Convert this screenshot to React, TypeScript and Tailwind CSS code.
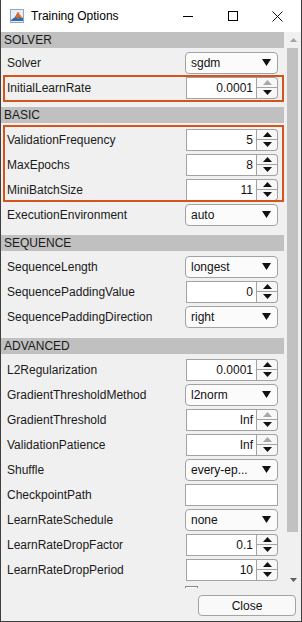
import React from 'react';

type Ctl =
	| { kind: 'drop'; value: string }
	| { kind: 'spin'; value: string; upOff?: boolean }
	| { kind: 'text' }
	| { kind: 'check' };

type Row = { label: string; ctl: Ctl };

function Up({ off }: { off?: boolean }) {
	return (
		<svg width="9" height="5" viewBox="0 0 9 5">
			<polygon points="4.5,0 9,5 0,5" fill={off ? '#a8a8a8' : '#111'} />
		</svg>
	);
}

function Down({ color = '#111' }: { color?: string }) {
	return (
		<svg width="9" height="5" viewBox="0 0 9 5">
			<polygon points="0,0 9,0 4.5,5" fill={color} />
		</svg>
	);
}

function Control({ ctl }: { ctl: Ctl }) {
	if (ctl.kind === 'drop') {
		return (
			<div className="flex h-[22px] w-[93px] items-center justify-between rounded-[4px] border border-[#a3a3a3] bg-[#fbfbfb] pl-[5px] pr-[6px] text-[12px] text-[#111]">
				<span>{ctl.value}</span>
				<svg width="9" height="7" viewBox="0 0 9 7">
					<polygon points="0,0 9,0 4.5,7" fill="#111" />
				</svg>
			</div>
		);
	}
	if (ctl.kind === 'spin') {
		return (
			<div className="flex h-[22px] w-[92px]">
				<div className="flex flex-1 items-center justify-end border border-[#a3a3a3] bg-white pr-[3px] text-[12px] text-[#111]">
					{ctl.value}
				</div>
				<div className="flex w-[21px] flex-col rounded-r-[4px] border border-l-0 border-[#a3a3a3] bg-[#f7f7f7]">
					<div className="flex flex-1 items-center justify-center border-b border-[#a3a3a3]">
						<Up off={ctl.upOff} />
					</div>
					<div className="flex flex-1 items-center justify-center">
						<Down />
					</div>
				</div>
			</div>
		);
	}
	if (ctl.kind === 'text') {
		return <div className="h-[22px] w-[93px] border border-[#a3a3a3] bg-white" />;
	}
	return <div className="mr-[80px] mt-[4px] h-[13px] w-[13px] self-start border border-[#888] bg-white" />;
}

function RowView({ row }: { row: Row }) {
	return (
		<div className="flex h-[25px] items-center pl-[6px] pr-[6px]">
			<span className="flex-1 self-center text-[12px] text-[#1a1a1a]">{row.label}</span>
			<Control ctl={row.ctl} />
		</div>
	);
}

function Header({ title }: { title: string }) {
	return (
		<div className="flex h-[16px] items-center bg-[#c0c0c0] pl-[3px] text-[12px] text-[#1a1a1a]">{title}</div>
	);
}

function Marked({ rows, cls }: { rows: Row[]; cls: string }) {
	return (
		<div className="relative">
			{rows.map((r) => (
				<RowView key={r.label} row={r} />
			))}
			<div className={`pointer-events-none absolute left-[2px] right-0 border-2 border-[#d4541c] ${cls}`} />
		</div>
	);
}

const advanced: Row[] = [
	{ label: 'L2Regularization', ctl: { kind: 'spin', value: '0.0001' } },
	{ label: 'GradientThresholdMethod', ctl: { kind: 'drop', value: 'l2norm' } },
	{ label: 'GradientThreshold', ctl: { kind: 'spin', value: 'Inf', upOff: true } },
	{ label: 'ValidationPatience', ctl: { kind: 'spin', value: 'Inf', upOff: true } },
	{ label: 'Shuffle', ctl: { kind: 'drop', value: 'every-ep...' } },
	{ label: 'CheckpointPath', ctl: { kind: 'text' } },
	{ label: 'LearnRateSchedule', ctl: { kind: 'drop', value: 'none' } },
	{ label: 'LearnRateDropFactor', ctl: { kind: 'spin', value: '0.1' } },
	{ label: 'LearnRateDropPeriod', ctl: { kind: 'spin', value: '10' } },
	// next row is scrolled out of view, only the box top peeks in
	{ label: '', ctl: { kind: 'check' } },
];

export default function App() {
	return (
		<div className="flex h-[622px] w-[302px] flex-col overflow-hidden border-x border-b border-[#3f3f3f] bg-[#f0f0f0] font-['Liberation_Sans',Arial,sans-serif]">
			{/* title bar */}
			<div className="flex h-[32px] shrink-0 items-center bg-white">
				<svg className="ml-[9px]" width="14" height="14" viewBox="0 0 14 14">
					<rect x="0.5" y="0.5" width="13" height="13" fill="#e8eef5" stroke="#9aa7b5" />
					<polygon points="1,11 5,8 8,3 10,6 13,9 13,12 1,12" fill="#2c6fb8" />
					<polygon points="5,8 8,3 10,6 9,10 7,9" fill="#e2661f" />
					<polygon points="8,3 10,6 13,9 11,9" fill="#f2a23a" />
				</svg>
				<span className="ml-[7px] flex-1 text-[12px] text-black">Training Options</span>
				<div className="flex h-full w-[45px] items-center justify-center">
					<div className="h-px w-[10px] bg-black" />
				</div>
				<div className="flex h-full w-[45px] items-center justify-center">
					<div className="h-[10px] w-[10px] border border-black" />
				</div>
				<div className="mr-px flex h-full w-[45px] items-center justify-center">
					<svg width="11" height="11" viewBox="0 0 11 11">
						<path d="M0.5 0.5 L10.5 10.5 M10.5 0.5 L0.5 10.5" stroke="#111" strokeWidth="1" />
					</svg>
				</div>
			</div>

			{/* scrolling panel */}
			<div className="flex h-[556px] shrink-0">
				<div className="w-[283px] overflow-hidden">
					<Header title="SOLVER" />
					<div className="pt-[2px] pb-[7px]">
						<RowView row={{ label: 'Solver', ctl: { kind: 'drop', value: 'sgdm' } }} />
						<Marked
							cls="top-0 -bottom-[2px]"
							rows={[{ label: 'InitialLearnRate', ctl: { kind: 'spin', value: '0.0001', upOff: true } }]}
						/>
					</div>
					<Header title="BASIC" />
					<div className="pt-[4px] pb-[8px]">
						<Marked
							cls="-top-[2px] bottom-0"
							rows={[
								{ label: 'ValidationFrequency', ctl: { kind: 'spin', value: '5' } },
								{ label: 'MaxEpochs', ctl: { kind: 'spin', value: '8' } },
								{ label: 'MiniBatchSize', ctl: { kind: 'spin', value: '11' } },
							]}
						/>
						<RowView row={{ label: 'ExecutionEnvironment', ctl: { kind: 'drop', value: 'auto' } }} />
					</div>
					<Header title="SEQUENCE" />
					<div className="pt-[3px] pb-[9px]">
						<RowView row={{ label: 'SequenceLength', ctl: { kind: 'drop', value: 'longest' } }} />
						<RowView row={{ label: 'SequencePaddingValue', ctl: { kind: 'spin', value: '0' } }} />
						<RowView row={{ label: 'SequencePaddingDirection', ctl: { kind: 'drop', value: 'right' } }} />
					</div>
					<Header title="ADVANCED" />
					<div className="pt-[3px]">
						{advanced.map((r, i) => (
							<RowView key={i} row={r} />
						))}
					</div>
				</div>
				{/* scrollbar */}
				<div className="flex w-[17px] flex-col">
					<div className="flex h-[16px] items-center justify-center pl-[2px]">
						<svg width="7" height="4" viewBox="0 0 7 4">
							<polygon points="3.5,0 7,4 0,4" fill="#a3a3a3" />
						</svg>
					</div>
					<div className="ml-[3px] h-[484px] w-[11px] bg-[#c1c1c1]" />
					<div className="flex-1" />
					<div className="flex h-[16px] items-center justify-center pl-[2px]">
						<svg width="7" height="4" viewBox="0 0 7 4">
							<polygon points="0,0 7,0 3.5,4" fill="#606060" />
						</svg>
					</div>
				</div>
			</div>

			{/* footer */}
			<div className="flex flex-1 justify-end pt-[7px] pr-[5px]">
				<button className="h-[21px] w-[98px] rounded-[4px] border border-[#a3a3a3] bg-[#f9f9f9] text-[12px] text-[#111]">
					Close
				</button>
			</div>
		</div>
	);
}
